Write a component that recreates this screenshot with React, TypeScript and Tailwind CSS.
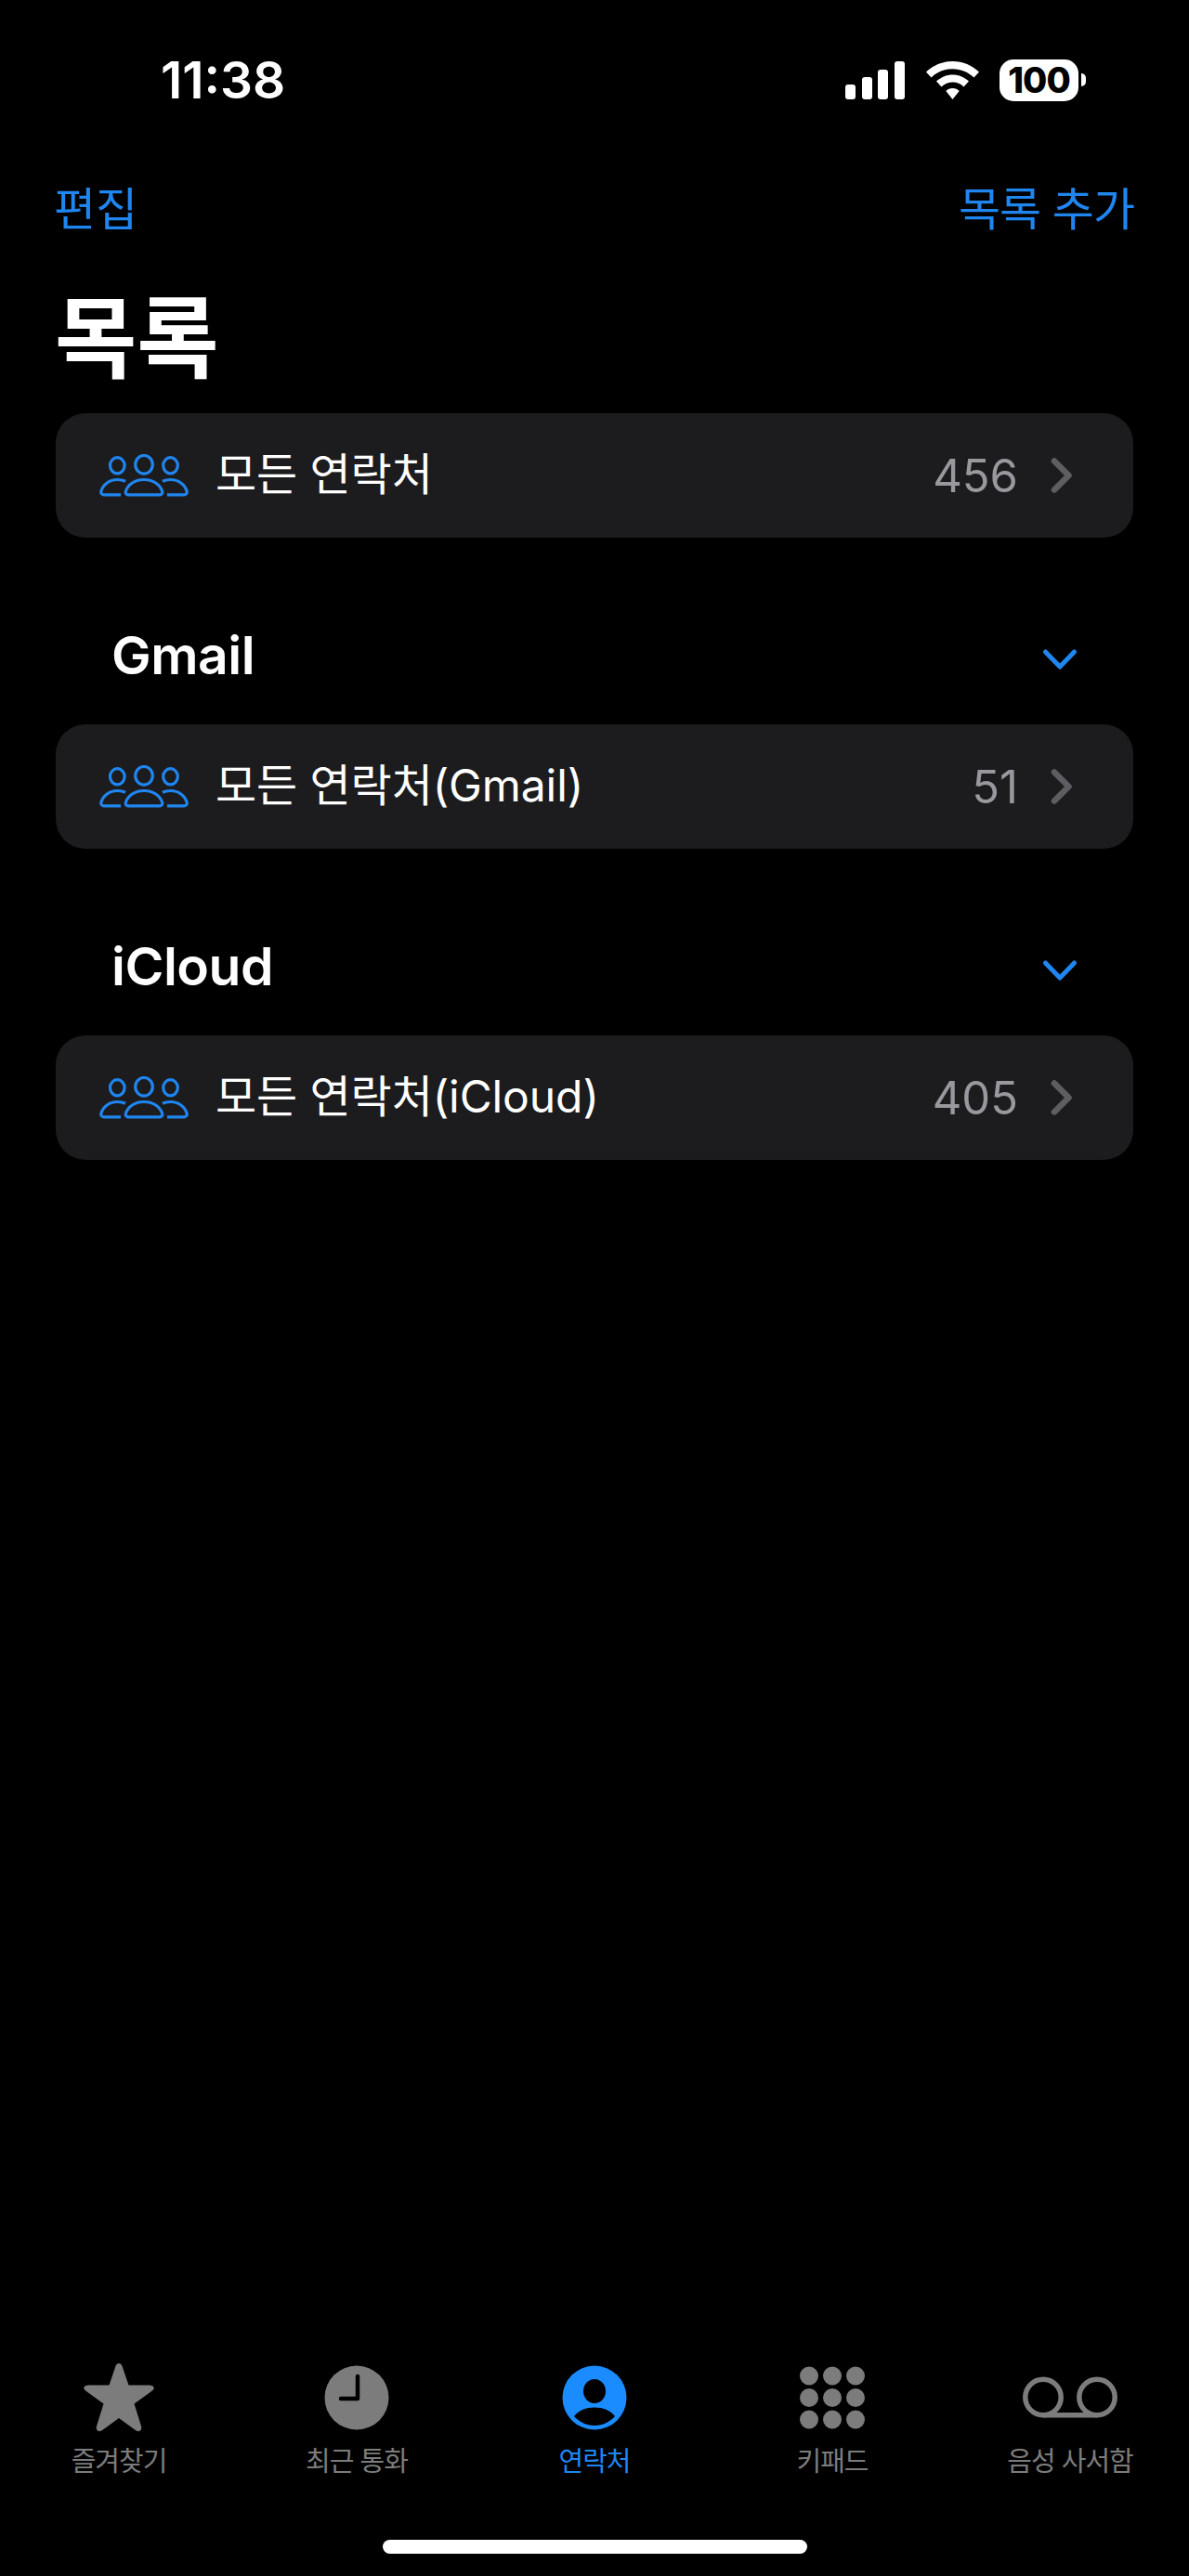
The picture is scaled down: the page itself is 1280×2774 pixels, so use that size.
const FONT = "font-['Inter','Noto_Sans_CJK_KR',sans-serif]";

function People() {
  return (
    <svg width="96" height="46" viewBox="0 0 96 46" fill="none" stroke="#1f86f0" strokeWidth="3.2" className="shrink-0">
      <ellipse cx="48" cy="11.3" rx="9.3" ry="9.8" />
      <ellipse cx="19.3" cy="12.3" rx="7.8" ry="8.6" />
      <ellipse cx="76.5" cy="12.3" rx="7.8" ry="8.6" />
      <path d="M31 43.8H65C67 43.8 68.3 42 67.6 40C65 32 57 27.5 48 27.5C39 27.5 31 32 28.4 40C27.7 42 29 43.8 31 43.8Z" />
      <path d="M28 29.2C25.5 28 22.5 27.5 19.5 27.5C11 27.5 4 32.5 1.9 40C1.3 42 2.6 43.8 4.6 43.8H23" />
      <path d="M68 29.2C70.5 28 73.5 27.5 76.5 27.5C85 27.5 92 32.5 94.1 40C94.7 42 93.4 43.8 91.4 43.8H73" />
    </svg>
  );
}

function Row({ label, count }: { label: string; count: string }) {
  return (
    <div className="mx-[60px] flex h-[134px] items-center rounded-[32px] bg-[#1c1c1e] pl-[47px] pr-[65px]">
      <People />
      <span className="ml-[29px] -mt-[3px] flex-1 text-[48px] leading-none tracking-[-0.1px] text-white">{label}</span>
      <span className="text-[49px] leading-none text-[#98989e]">{count}</span>
      <svg width="24" height="38" viewBox="0 0 24 38" fill="none" stroke="#5e5e62" strokeWidth="6.5" strokeLinecap="round" strokeLinejoin="round" className="ml-[35px]">
        <path d="M4 3.5L19.5 19L4 34.5" />
      </svg>
    </div>
  );
}

function Section({ title }: { title: string }) {
  return (
    <div className="mx-[60px] mb-[22px] mt-[73px] flex h-[106px] items-center justify-between pl-[60px] pr-[59px]">
      <span className="text-[57px] font-semibold leading-none tracking-[-0.5px] text-white">{title}</span>
      <svg width="40" height="26" viewBox="0 0 40 26" fill="none" stroke="#1f86f0" strokeWidth="5" strokeLinecap="round" strokeLinejoin="round" className="mt-[9px]">
        <path d="M4.5 5L20 21L35.5 5" />
      </svg>
    </div>
  );
}

function Tab({ label, active, children }: { label: string; active?: boolean; children: React.ReactNode }) {
  return (
    <div className="flex flex-col items-center">
      <div className="flex h-[76px] w-full items-center justify-center">{children}</div>
      <span className={`mt-[13px] text-[29px] leading-[36px] tracking-[-1px] ${active ? "text-[#1f86f0]" : "text-[#7c7c7c]"}`}>{label}</span>
    </div>
  );
}

export default function App() {
  return (
    <div className={`${FONT} flex min-h-[2774px] flex-col bg-black`}>
      <div className="flex h-[172px] items-center justify-between pl-[173px] pr-[111px]">
        <span className="text-[55px] font-semibold leading-none text-white">11:38</span>
        <div className="flex items-center">
          <svg width="64" height="41" viewBox="0 0 64 41" fill="#fff">
            <rect x="0" y="25" width="11" height="16" rx="3" />
            <rect x="18" y="17" width="11" height="24" rx="3" />
            <rect x="35" y="9" width="11" height="32" rx="3" />
            <rect x="53" y="0" width="11" height="41" rx="3" />
          </svg>
          <svg width="57" height="41" viewBox="0 0 57 41" fill="#fff" className="ml-[23px]">
            <path d="M28.5 0C39.5 0 49.5 4.3 57 11.5L51.5 17.5C45.5 11.7 37.5 8.2 28.5 8.2C19.5 8.2 11.5 11.7 5.5 17.5L0 11.5C7.5 4.3 17.5 0 28.5 0Z" />
            <path d="M28.5 14.5C35.3 14.5 41.5 17.2 46 21.6L40.5 27.5C37.4 24.5 33.2 22.6 28.5 22.6C23.8 22.6 19.6 24.5 16.5 27.5L11 21.6C15.5 17.2 21.7 14.5 28.5 14.5Z" />
            <path d="M28.5 29C31.3 29 33.9 30.1 35.7 31.9L28.5 41L21.3 31.9C23.1 30.1 25.7 29 28.5 29Z" />
          </svg>
          <div className="ml-[22px] flex h-[45px] w-[85px] items-center justify-center rounded-[15px] bg-white text-[38px] font-extrabold leading-none tracking-[-1px] text-black">100</div>
          <div className="ml-[3px] h-[14px] w-[5px] rounded-r-full bg-white" />
        </div>
      </div>

      <div className="flex h-[96px] items-start justify-between pl-[58px] pr-[59px] pt-[27px]">
        <span className="text-[49px] leading-[54px] text-[#1f86f0]">편집</span>
        <span className="text-[49px] leading-[54px] tracking-[-1px] text-[#1f86f0]">목록 추가</span>
      </div>

      <div className="h-[177px] pl-[59px]">
        <div className="pt-[46px] text-[96px] font-bold leading-[100px] text-white">목록</div>
      </div>

      <Row label="모든 연락처" count="456" />
      <Section title="Gmail" />
      <Row label="모든 연락처(Gmail)" count="51" />
      <Section title="iCloud" />
      <Row label="모든 연락처(iCloud)" count="405" />

      <div className="flex-1" />

      <div className="grid grid-cols-5">
        <Tab label="즐겨찾기">
          <svg width="76" height="74" viewBox="0 0 76 74" fill="#7c7c7c">
            <path d="M38 0C40 0 41 1.5 41.7 3.5L48.5 23.5H70.5C74 23.5 76.5 25 75.5 27.5C75 29 73 30 71.5 31.2L54.5 43.5L61.2 65C62 67.5 63 70 61.5 72C59.5 74 57.5 73 55.5 71.7L38 59L20.5 71.7C18.5 73 16.5 74 14.5 72C13 70 14 67.5 14.8 65L21.5 43.5L4.5 31.2C3 30 1 29 0.5 27.5C-0.5 25 2 23.5 5.5 23.5H27.5L34.3 3.5C35 1.5 36 0 38 0Z" />
          </svg>
        </Tab>
        <Tab label="최근 통화">
          <svg width="70" height="70" viewBox="0 0 70 70">
            <circle cx="35" cy="35" r="34.5" fill="#7c7c7c" />
            <path d="M36 12V36H18" fill="none" stroke="#000" strokeWidth="4.5" strokeLinecap="round" strokeLinejoin="round" />
          </svg>
        </Tab>
        <Tab label="연락처" active>
          <svg width="70" height="70" viewBox="0 0 70 70">
            <circle cx="35" cy="35" r="34.5" fill="#1a8cff" />
            <ellipse cx="35" cy="28" rx="12" ry="13" fill="#000" />
            <path d="M13 55C18 48.5 26 45.5 35 45.5C44 45.5 52 48.5 57 55C51.5 61 44 65 35 65C26 65 18.5 61 13 55Z" fill="#000" />
          </svg>
        </Tab>
        <Tab label="키패드">
          <svg width="70" height="70" viewBox="0 0 70 70" fill="#7c7c7c">
            <circle cx="10" cy="11.5" r="10" /><circle cx="35" cy="11.5" r="10" /><circle cx="60" cy="11.5" r="10" />
            <circle cx="10" cy="35" r="10" /><circle cx="35" cy="35" r="10" /><circle cx="60" cy="35" r="10" />
            <circle cx="10" cy="58.5" r="10" /><circle cx="35" cy="58.5" r="10" /><circle cx="60" cy="58.5" r="10" />
          </svg>
        </Tab>
        <Tab label="음성 사서함">
          <svg width="102" height="46" viewBox="0 0 102 46" fill="none" stroke="#7c7c7c" strokeWidth="5.5">
            <circle cx="22" cy="22.5" r="19.2" />
            <circle cx="80" cy="22.5" r="19.2" />
            <path d="M22 41.7H80" />
          </svg>
        </Tab>
      </div>

      <div className="flex h-[105px] justify-center pt-[66px]">
        <div className="h-[15px] w-[457px] rounded-full bg-white" />
      </div>
    </div>
  );
}
